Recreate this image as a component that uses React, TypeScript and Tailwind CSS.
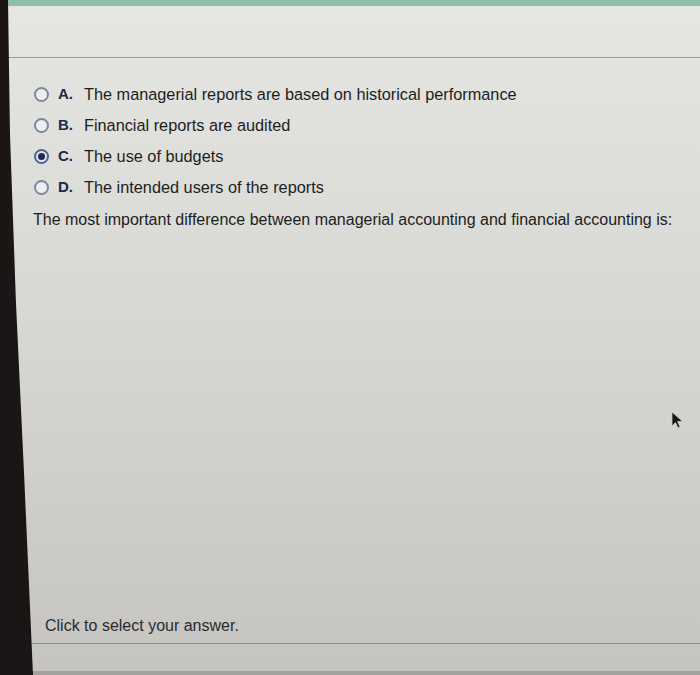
import React from "react";

const options = [
  { key: "A", text: "The managerial reports are based on historical performance" },
  { key: "B", text: "Financial reports are audited" },
  { key: "C", text: "The use of budgets", selected: true },
  { key: "D", text: "The intended users of the reports" },
];

function Radio({ on }: { on?: boolean }) {
  return (
    <span
      className={`flex h-[15px] w-[15px] shrink-0 items-center justify-center rounded-full border-2 ${
        on ? "border-[#4d6790] bg-[#dfe4ec]" : "border-[#7d889a] bg-[#eceeef]"
      }`}
    >
      {on ? <span className="h-[7px] w-[7px] rounded-full bg-[#1d2a52]" /> : null}
    </span>
  );
}

export default function App() {
  return (
    <div
      className="relative h-[675px] w-[700px] overflow-hidden bg-gradient-to-b from-[#e6e7e2] via-[#d6d6d2] to-[#c6c4c1] text-[#1d1d1d]"
      style={{ fontFamily: '"Liberation Sans", Arial, sans-serif' }}
    >
      {/* top teal strip */}
      <div className="h-[6px] bg-[#8dbfae]" />

      <div className="flex h-[52px] items-end">
        <div className="ml-[8px] h-px flex-1 bg-[#9c9d99]" />
      </div>

      <div className="pl-[33px] pt-[21px]">
        <div className="flex flex-col">
          {options.map((o) => (
            <div key={o.key} className="flex h-[31px] items-center pl-[1px]">
              <Radio on={o.selected} />
              <span className="ml-[9px] w-[26px] text-[15px] font-bold text-[#1e2a48]">{o.key}.</span>
              <span className="text-[16.3px]">{o.text}</span>
            </div>
          ))}
        </div>
        <p className="mt-[1px] text-[16px] leading-[31px]">
          The most important difference between managerial accounting and financial accounting is:
        </p>
      </div>

      <div className="flex h-[408px] items-end pl-[45px]">
        <p className="pb-[5px] text-[16px] text-[#2a2a2a]">Click to select your answer.</p>
      </div>
      <div className="ml-[30px] h-px bg-[#8f8e8b]" />

      {/* cursor */}
      <svg className="absolute left-[670px] top-[411px]" width="14" height="18" viewBox="0 0 14 18">
        <path d="M2 1 L2 15 L5.5 11.5 L8 17 L10 16 L7.6 10.5 L12.5 10.5 Z" fill="#151515" stroke="#c8c8c8" strokeWidth="0.8" />
      </svg>

      {/* bottom strip */}
      <div className="absolute bottom-0 left-0 h-[4px] w-full bg-[#a3a19e]" />

      {/* photographed screen bezel on the left */}
      <div className="absolute inset-y-0 left-0 w-[34px] bg-[#1b1615] [clip-path:polygon(0_0,8px_0,10px_20%,16px_45%,24px_70%,30px_90%,33px_100%,0_100%)]" />
    </div>
  );
}
